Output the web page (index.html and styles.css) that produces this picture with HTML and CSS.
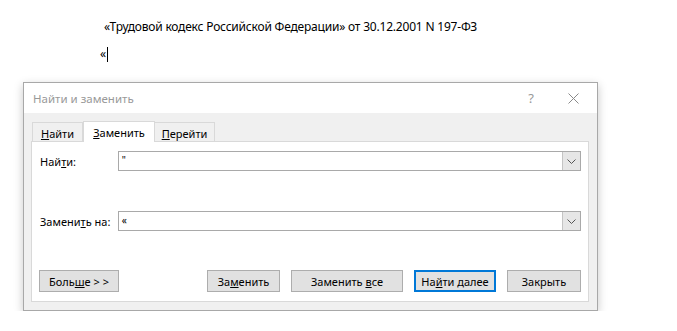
FILE: index.html
```html
<!DOCTYPE html>
<html lang="ru">
<head>
    <meta charset="UTF-8">
    <title>Найти и заменить</title>
    <link rel="stylesheet" href="styles.css">
</head>
<body>

    <!-- Document text behind the dialog -->
    <div class="doc">
        <p class="doc-line">«Трудовой кодекс Российской Федерации» от 30.12.2001 N 197-ФЗ</p>
        <p class="doc-line doc-caret">«<span class="caret"></span></p>
    </div>

    <!-- Find and replace dialog -->
    <div class="dialog">
        <div class="titlebar">
            <span class="title">Найти и заменить</span>
            <span class="help">?</span>
            <svg class="close" width="11" height="11" viewBox="0 0 11 11">
                <path d="M0.5 0.5 L10.5 10.5 M10.5 0.5 L0.5 10.5" stroke="#8a8a8a" stroke-width="1" fill="none"/>
            </svg>
        </div>

        <div class="dialog-body">
            <div class="tabs">
                <div class="tab"><u>Н</u>айти</div>
                <div class="tab active"><u>З</u>аменить</div>
                <div class="tab"><u>П</u>ерейти</div>
            </div>

            <div class="panel">
                <div class="field">
                    <label class="field-label">Най<u>т</u>и:</label>
                    <div class="combo">
                        <span class="combo-text">"</span>
                        <span class="combo-btn">
                            <svg width="9" height="5" viewBox="0 0 9 5"><path d="M0.5 0.5 L4.5 4.5 L8.5 0.5" stroke="#555" fill="none"/></svg>
                        </span>
                    </div>
                </div>

                <div class="field field-replace">
                    <label class="field-label">Замени<u>т</u>ь на:</label>
                    <div class="combo">
                        <span class="combo-text">«</span>
                        <span class="combo-btn">
                            <svg width="9" height="5" viewBox="0 0 9 5"><path d="M0.5 0.5 L4.5 4.5 L8.5 0.5" stroke="#555" fill="none"/></svg>
                        </span>
                    </div>
                </div>

                <div class="buttons">
                    <button class="btn btn-more">Боль<u>ш</u>е &gt; &gt;</button>
                    <div class="spacer"></div>
                    <button class="btn btn-replace">За<u>м</u>енить</button>
                    <button class="btn btn-all">Заменить <u>в</u>се</button>
                    <button class="btn btn-next">На<u>й</u>ти далее</button>
                    <button class="btn btn-close">Закрыть</button>
                </div>
            </div>
        </div>
    </div>

</body>
</html>
```
FILE: styles.css
```css
body {
    margin: 0;
    background: #fff;
    font-family: "Noto Sans", "Open Sans", sans-serif;
    color: #000;
}
.doc {
    padding: 19px 0 0 100px;
    height: 82px;
    box-sizing: border-box;
    font-size: 12px;
    letter-spacing: -0.2px;
}
.doc-line {
    margin: 0;
    line-height: 16px;
    padding-left: 4px;
}
.doc-caret {
    margin-top: 11px;
    padding-left: 0;
    display: flex;
    align-items: center;
}
.caret {
    display: inline-block;
    width: 1px;
    height: 15px;
    background: #000;
    margin-left: 1px;
}
.dialog {
    margin-left: 23px;
    width: 575px;
    height: 229px;
    box-sizing: border-box;
    border: 1px solid #a8a8a8;
    box-shadow: 0 3px 9px rgba(0, 0, 0, 0.22);
    font-size: 11px;
    display: flex;
    flex-direction: column;
}
.titlebar {
    height: 30px;
    background: #fff;
    display: flex;
    align-items: center;
    padding-left: 9px;
}
.title {
    color: #999;
    flex-grow: 1;
    font-size: 11.5px;
}
.help {
    color: #999;
    font-size: 13px;
    margin-right: 34px;
}
.close {
    margin-right: 18px;
}
.dialog-body {
    flex-grow: 1;
    background: #f0f0f0;
    padding: 8px 8px 8px 7px;
    display: flex;
    flex-direction: column;
}
.tabs {
    display: flex;
    height: 20px;
    padding-left: 1px;
    align-items: flex-end;
}
.tab {
    height: 19px;
    box-sizing: border-box;
    border: 1px solid #d9d9d9;
    border-bottom: none;
    padding: 2px 0 0 0;
    line-height: 17px;
    text-align: center;
}
.tab + .tab {
    border-left: none;
}
.tab.active {
    height: 21px;
    background: #fff;
    margin-bottom: -1px;
    padding-top: 2px;
    border-left: 1px solid #d9d9d9;
    border-right: 1px solid #d9d9d9;
    position: relative;
}
.tab.active + .tab {
    border-left: none;
}
.tab:first-child {
    width: 51px;
}
.tab.active {
    width: 72px;
}
.tab:last-child {
    width: 60px;
}
.panel {
    flex-grow: 1;
    background: #fff;
    border: 1px solid #d9d9d9;
    padding: 9px 7px 9px 7px;
    display: flex;
    flex-direction: column;
}
.field {
    display: flex;
    align-items: center;
    height: 20px;
}
.field-replace {
    margin-top: 40px;
}
.field-label {
    width: 78px;
    padding-left: 1px;
}
.combo {
    width: 464px;
    height: 20px;
    box-sizing: border-box;
    border: 1px solid #a9a9a9;
    display: flex;
    align-items: stretch;
}
.combo-text {
    flex-grow: 1;
    padding-left: 3px;
    line-height: 17px;
    font-size: 10px;
}
.combo-btn {
    width: 17px;
    background: #e6e6e6;
    border-left: 1px solid #c4c4c4;
    display: flex;
    align-items: center;
    justify-content: center;
}
.buttons {
    margin-top: auto;
    display: flex;
    gap: 11px;
}
.spacer {
    flex-grow: 1;
}
.btn {
    height: 22px;
    box-sizing: border-box;
    background: #e1e1e1;
    border: 1px solid #adadad;
    font-family: inherit;
    font-size: 11px;
    color: #000;
    padding: 0;
}
.btn-more {
    width: 80px;
}
.btn-replace {
    width: 73px;
}
.btn-all {
    width: 112px;
}
.btn-next {
    width: 82px;
    border: 2px solid #0078d7;
}
.btn-close {
    width: 74px;
}
```
